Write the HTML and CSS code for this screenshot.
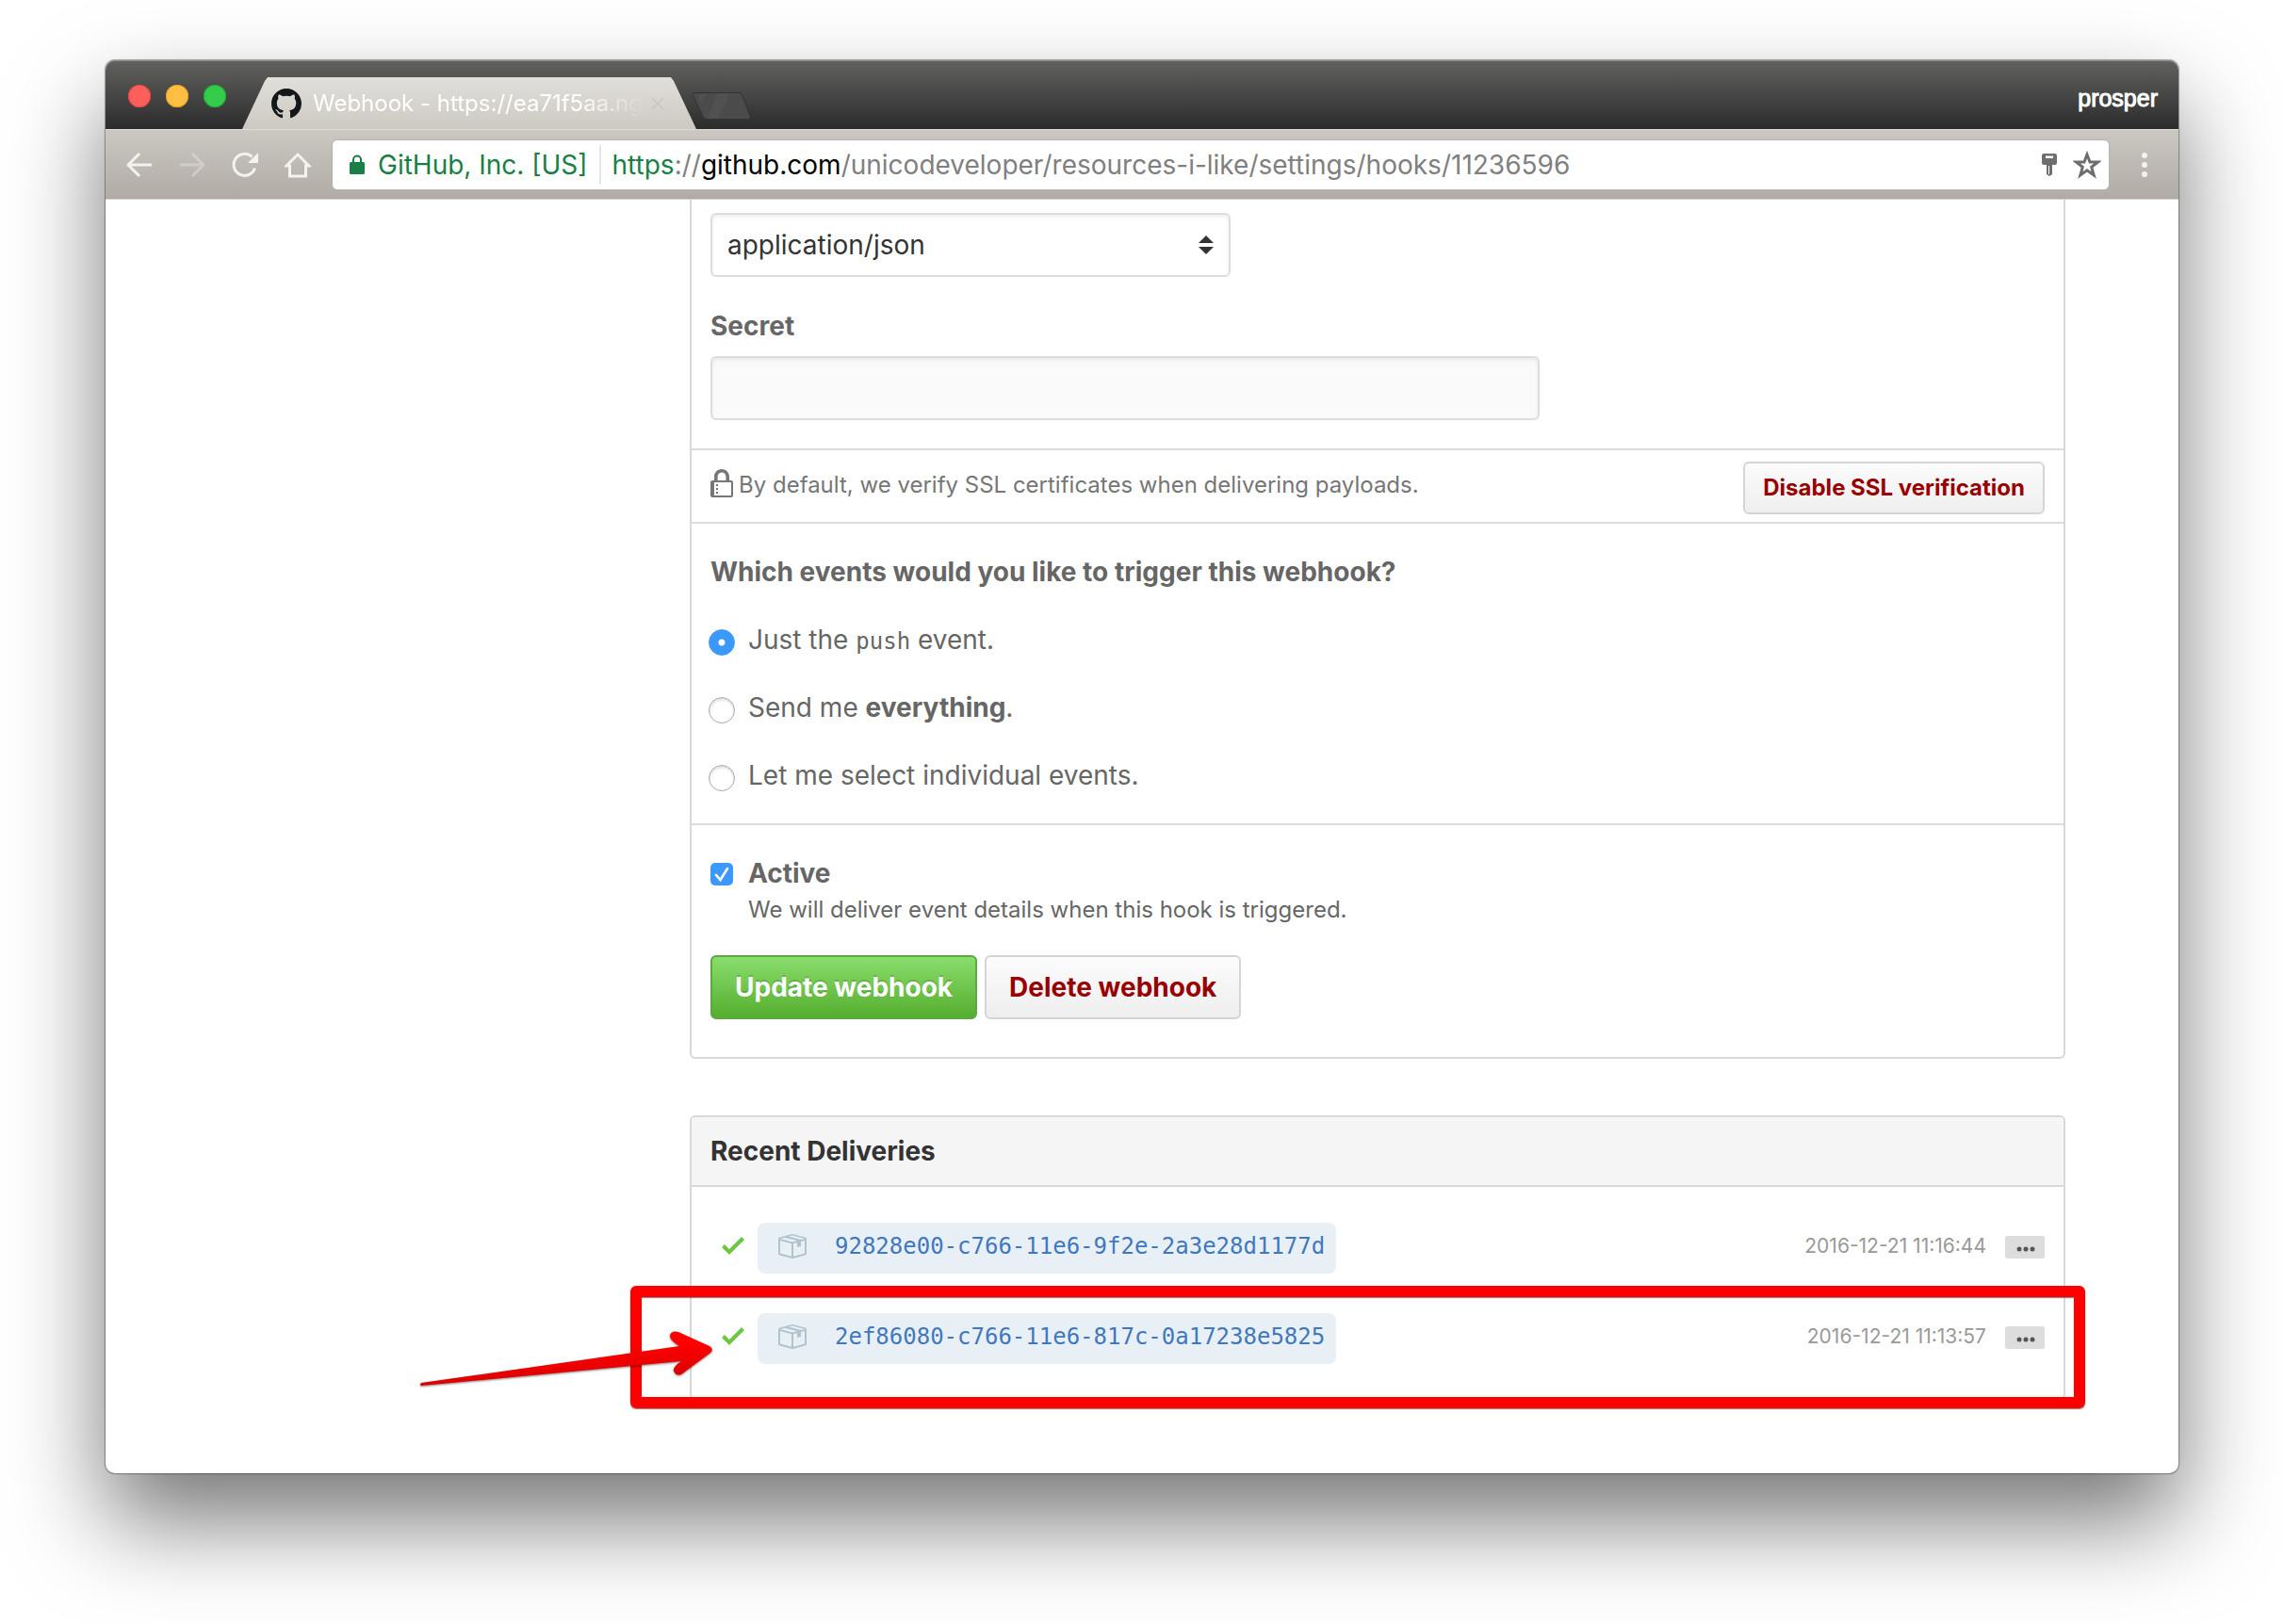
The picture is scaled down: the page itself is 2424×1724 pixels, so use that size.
FILE: index.html
```
<!DOCTYPE html>
<html lang="en">
<head>
<meta charset="utf-8">
<title>Webhook - https://ea71f5aa.ng</title>
<link rel="stylesheet" href="styles.css">
</head>
<body>
<svg class="sprite" width="0" height="0" aria-hidden="true">
  <symbol id="check" viewBox="0 0 12 16"><path d="M12 5l-8 8-4-4 1.5-1.5L4 10l6.5-6.5z"/></symbol>
  <symbol id="package" viewBox="0 0 16 16"><path fill-rule="evenodd" d="M1 4.27v7.47c0 .45.3.84.75.97l6.5 1.73c.16.05.34.05.5 0l6.5-1.73c.45-.13.75-.52.75-.97V4.27c0-.45-.3-.84-.75-.97l-6.5-1.74a1.4 1.4 0 0 0-.5 0L1.75 3.3c-.45.13-.75.52-.75.97zm7 9.09l-6-1.59V5l6 1.61v6.75zM2 4l2.5-.67L11 5.06l-2.5.67L2 4zm13 7.77l-6 1.59V6.61l2-.55V8.5l2-.53V5.53L15 5v6.77zm-2-7.24L6.5 2.8l2-.53L15 4l-2 .53z"/></symbol>
  <symbol id="dots" viewBox="0 0 42 24"><circle cx="15" cy="14" r="2.5"/><circle cx="22" cy="14" r="2.5"/><circle cx="29" cy="14" r="2.5"/></symbol>
</svg>
<div class="window">
  <header class="titlebar">
    <div class="lights">
      <button class="light light-close" aria-label="Close"></button>
      <button class="light light-min" aria-label="Minimize"></button>
      <button class="light light-max" aria-label="Zoom"></button>
    </div>
    <div class="tab">
      <svg class="mark" viewBox="0 0 16 16" aria-hidden="true"><path fill-rule="evenodd" d="M8 0C3.58 0 0 3.58 0 8c0 3.54 2.29 6.53 5.47 7.59.4.07.55-.17.55-.38 0-.19-.01-.82-.01-1.49-2.01.37-2.53-.49-2.69-.94-.09-.23-.48-.94-.82-1.13-.28-.15-.68-.52-.01-.53.63-.01 1.08.58 1.23.82.72 1.21 1.87.87 2.33.66.07-.52.28-.87.51-1.07-1.78-.2-3.64-.89-3.64-3.95 0-.87.31-1.59.82-2.15-.08-.2-.36-1.02.08-2.12 0 0 .67-.21 2.2.82.64-.18 1.32-.27 2-.27s1.36.09 2 .27c1.53-1.04 2.2-.82 2.2-.82.44 1.1.16 1.92.08 2.12.51.56.82 1.27.82 2.15 0 3.07-1.87 3.75-3.65 3.95.29.25.54.73.54 1.48 0 1.07-.01 1.93-.01 2.2 0 .21.15.46.55.38A8.01 8.01 0 0 0 16 8c0-4.42-3.58-8-8-8z"/></svg>
      <span class="tab-title">Webhook - https://ea71f5aa.ng</span>
      <button class="tab-close" aria-label="Close tab"><svg viewBox="0 0 14 14"><path d="M1 1l12 12M13 1L1 13"/></svg></button>
    </div>
    <button class="new-tab" aria-label="New tab"><svg viewBox="0 0 64 32"><path class="nt" d="M3 1.500h47q3 0 4 3l8 22q1 3-2 3H16q-3 0-4-3L1.500 4.500q-1-3 1.500-3z"/><path class="nt-shine" d="M27 2h14L28 29H17zM12 2h4l-6 10-3-7z"/></svg></button>
    <span class="profile">prosper</span>
  </header>
  <nav class="toolbar">
    <button class="nav" aria-label="Back"><svg viewBox="0 0 28 28"><path d="M27 14H3M14 2L2 14l12 12"/></svg></button>
    <button class="nav nav-off" aria-label="Forward"><svg viewBox="0 0 28 28"><path d="M1 14h24M14 2l12 12-12 12"/></svg></button>
    <button class="nav" aria-label="Reload"><svg viewBox="0 0 28 28"><path d="M24.500 17.500A11.500 11.500 0 1 1 21.500 5.500"/><path class="solid" d="M28 1v11H17z"/></svg></button>
    <button class="nav" aria-label="Home"><svg viewBox="0 0 28 28"><path d="M2 15L14 3l12 12h-3.500v11h-17V15z"/></svg></button>
    <div class="address">
      <svg class="secure" viewBox="0 0 16 22" aria-hidden="true"><rect y="8" width="16" height="13" rx="1.500"/><path d="M4 9V5.500a4 4 0 0 1 8 0V9"/></svg>
      <span class="owner">GitHub, Inc. [US]</span>
      <span class="url"><span class="scheme">https</span>://<span class="host">github.com</span>/unicodeveloper/resources-i-like/settings/hooks/11236596</span>
      <svg class="key" viewBox="0 0 16 24" aria-hidden="true"><path fill-rule="evenodd" d="M2 0h12q2 0 2 2v8q0 2-2 2h-3v10l-3 2-3-2V12H2q-2 0-2-2V2q0-2 2-2zM4 2.500v2.500h8V2.500zM7 13v9h1v-9z"/></svg>
      <svg class="star" viewBox="0 0 30 30" aria-hidden="true"><path d="M15 4l3 8h8.500l-6.800 5.300 2.500 8.700-7.200-5.200L7.800 26l2.500-8.700L3.500 12H12z"/></svg>
    </div>
    <button class="menu" aria-label="Menu"><svg viewBox="0 0 8 28"><circle cx="4" cy="4" r="3"/><circle cx="4" cy="14" r="3"/><circle cx="4" cy="24" r="3"/></svg></button>
  </nav>
  <main class="page">
    <form class="panel hook-form">
      <div class="section section-fields">
        <select class="field select" aria-label="Content type"><option>application/json</option></select>
        <label class="label" for="secret">Secret</label>
        <input class="field secret" id="secret" type="text">
      </div>
      <div class="section ssl">
        <svg class="lock" viewBox="0 0 12 16" aria-hidden="true"><path fill-rule="evenodd" d="M4 13H3v-1h1v1zm8-6v7c0 .55-.45 1-1 1H1c-.55 0-1-.45-1-1V7c0-.55.45-1 1-1h1V4c0-2.200 1.800-4 4-4s4 1.800 4 4v2h1c.55 0 1 .45 1 1zM3.800 6h4.410V4c0-1.220-.98-2.200-2.200-2.200-1.220 0-2.200.98-2.200 2.200v2H3.800zM11 7H2v7h9V7zM4 8H3v1h1V8zm0 2H3v1h1v-1z"/></svg>
        <span class="ssl-text">By default, we verify SSL certificates when delivering payloads.</span>
        <button class="btn btn-sm btn-danger" type="button">Disable SSL verification</button>
      </div>
      <div class="section events" role="radiogroup" aria-labelledby="events-title">
        <h2 class="question" id="events-title">Which events would you like to trigger this webhook?</h2>
        <label class="choice"><input class="radio" type="radio" name="events" checked><span>Just the <code>push</code> event.</span></label>
        <label class="choice"><input class="radio" type="radio" name="events"><span>Send me <strong>everything</strong>.</span></label>
        <label class="choice"><input class="radio" type="radio" name="events"><span>Let me select individual events.</span></label>
      </div>
      <div class="section actions">
        <label class="choice"><input class="checkbox" type="checkbox" checked><strong>Active</strong></label>
        <p class="hint">We will deliver event details when this hook is triggered.</p>
        <div class="buttons">
          <button class="btn btn-primary" type="button">Update webhook</button>
          <button class="btn btn-danger" type="button">Delete webhook</button>
        </div>
      </div>
    </form>
    <section class="panel deliveries">
      <h2 class="panel-title">Recent Deliveries</h2>
      <ul class="list">
        <li class="delivery">
          <svg class="ok" aria-label="Delivered"><use href="#check"/></svg>
          <a class="guid" href="#d1"><svg class="box" aria-hidden="true"><use href="#package"/></svg><code>92828e00-c766-11e6-9f2e-2a3e28d1177d</code></a>
          <time class="time">2016-12-21 11:16:44</time>
          <button class="more" aria-label="Details"><svg><use href="#dots"/></svg></button>
        </li>
        <li class="delivery">
          <svg class="ok" aria-label="Delivered"><use href="#check"/></svg>
          <a class="guid" href="#d2"><svg class="box" aria-hidden="true"><use href="#package"/></svg><code>2ef86080-c766-11e6-817c-0a17238e5825</code></a>
          <time class="time">2016-12-21 11:13:57</time>
          <button class="more" aria-label="Details"><svg><use href="#dots"/></svg></button>
          <div class="highlight"></div>
          <svg class="arrow" viewBox="0 0 314 62" aria-hidden="true">
            <defs><linearGradient id="red" x1="0" y1="0" x2="0.200" y2="1"><stop offset=".4" stop-color="#f00"/><stop offset="1" stop-color="#d80000"/></linearGradient></defs>
            <path fill="url(#red)" d="M2 55L276 16Q266 10 266 5Q267-1 275 1L308 16Q313 19 309 23L278 46Q272 48 270 42Q269 38 278 32L2 58Q0 57 2 55z"/>
          </svg>
        </li>
      </ul>
    </section>
  </main>
</div>
</body>
</html>
```
FILE: styles.css
```
* { box-sizing: border-box; }

body {
  margin: 0;
  padding: 64px 112px 160px;
  background: #fff;
  color: #666;
  font: 28px/42px Inter, "Liberation Sans", sans-serif;
}

h2, p, ul { margin: 0; padding: 0; }
button { margin: 0; padding: 0; border: 0; background: none; font: inherit; }
svg { display: block; flex: none; }
.sprite { position: absolute; }

.window {
  border-radius: 10px;
  background: #fff;
  box-shadow: 0 0 1px 1px rgba(0, 0, 0, .35), 0 50px 100px rgba(0, 0, 0, .54);
}

/* Title bar */
.titlebar {
  display: flex;
  align-items: flex-end;
  height: 73px;
  padding: 0 22px 0 24px;
  border-radius: 10px 10px 0 0;
  background: linear-gradient(#616260, #2b2b2b);
  box-shadow: inset 0 1px #8c8c8c;
}
.lights { display: flex; gap: 16px; padding-bottom: 23px; }
.light { width: 24px; height: 24px; border-radius: 50%; }
.light-close { background: #ff5f5a; box-shadow: inset 0 0 0 1px #e2463f; }
.light-min { background: #fdbe41; box-shadow: inset 0 0 0 1px #dfa023; }
.light-max { background: #35cb4b; box-shadow: inset 0 0 0 1px #1faa30; }
.tab {
  display: flex;
  align-items: center;
  width: 482px;
  height: 55px;
  margin-left: 17px;
  padding: 0 34px 0 31px;
  background: linear-gradient(#e1dfda, #cdc9c2);
  clip-path: polygon(0 100%, 24px 4px, 27px 0, 455px 0, 458px 4px, 100% 100%);
}
.mark { width: 32px; height: 32px; fill: #14171a; }
.tab-title {
  flex: 1;
  margin-left: 12px;
  color: #fff;
  font-size: 24px;
  white-space: nowrap;
  mask-image: linear-gradient(90deg, #000 78%, transparent 98%);
}
.tab-close svg { width: 14px; height: 14px; stroke: #c9c9c9; stroke-width: 2; }
.new-tab { padding: 0 0 8px; margin-left: -5px; }
.new-tab svg { width: 64px; height: 32px; }
.nt { fill: #4b4b4b; stroke: #333; }
.nt-shine { fill: #555; opacity: .6; }
.profile {
  margin-left: auto;
  padding-bottom: 12px;
  color: #fff;
  font-family: "Liberation Sans", sans-serif;
  font-size: 25px;
  -webkit-text-stroke: 1px #fff;
}

/* Toolbar */
.toolbar {
  display: flex;
  align-items: center;
  gap: 28px;
  height: 75px;
  padding: 0 32px 0 22px;
  border-top: 1px solid #dedcd6;
  border-bottom: 1px solid #d3cfc6;
  background: linear-gradient(#cbc8c1, #b0aba5);
}
.nav svg { width: 28px; height: 28px; fill: none; stroke: #f3f2f0; stroke-width: 3; }
.nav .solid { fill: #f3f2f0; stroke: none; }
.nav-off { opacity: .35; }
.address {
  display: flex;
  flex: 1;
  align-items: center;
  height: 54px;
  margin-left: -6px;
  padding: 0 8px 0 18px;
  border: 1px solid #b3b3b1;
  border-radius: 6px;
  background: #fff;
  color: #808080;
  white-space: nowrap;
}
.secure { width: 16px; height: 22px; fill: #188044; }
.secure path { fill: none; stroke: #188044; stroke-width: 2; }
.owner {
  margin-left: 14px;
  padding-right: 12px;
  border-right: 2px solid #e6e6e6;
  color: #188044;
}
.url { flex: 1; padding-left: 12px; }
.scheme { color: #188044; }
.host { color: #000; }
.key { width: 16px; height: 24px; fill: #6e6e6e; }
.star { width: 30px; height: 30px; margin-left: 17px; fill: none; stroke: #6e6e6e; stroke-width: 3; }
.menu { margin-left: 5px; }
.menu svg { width: 8px; height: 28px; fill: #f3f2f0; }

/* Page */
.page {
  display: flex;
  flex-direction: column;
  gap: 60px;
  padding: 0 120px 78px 620px;
}
.panel { border: 2px solid #d8d8d8; border-radius: 6px; }
.hook-form { border-top: 0; border-radius: 0 0 6px 6px; }
.section { padding: 30px 20px; }
.section + .section { border-top: 2px solid #ddd; }
.section-fields { display: flex; flex-direction: column; align-items: flex-start; padding-top: 14px; }

.field {
  height: 68px;
  padding: 0 16px;
  border: 2px solid #ddd;
  border-radius: 6px;
  box-shadow: inset 0 2px 4px rgba(0, 0, 0, .075);
  color: #333;
  font: inherit;
}
.select {
  width: 552px;
  appearance: none;
  background: #fff url("data:image/svg+xml,%3Csvg xmlns='http://www.w3.org/2000/svg' viewBox='0 0 16 20'%3E%3Cpath fill='%23333' d='M0 8l8-8 8 8zM0 12h16l-8 8z'/%3E%3C/svg%3E") no-repeat right 16px center / 16px 20px;
}
.label { margin: 31px 0 11px; font-weight: 700; }
.secret { width: 880px; background: #fafafa; }

.ssl { display: flex; align-items: flex-start; padding: 12px 20px 8px; }
.lock { width: 24px; height: 32px; margin-top: 8px; fill: #767676; }
.ssl-text { flex: 1; margin-left: 6px; color: #767676; font-size: 24px; line-height: 50px; }

.btn {
  height: 68px;
  padding: 0 24px;
  border: 2px solid #d5d5d5;
  border-radius: 6px;
  background: linear-gradient(#fcfcfc, #eee);
  font-weight: 700;
}
.btn-sm { height: 56px; padding: 0 19px; font-size: 24px; }
.btn-danger { color: #900; }
.btn-primary {
  border-color: #5ca941;
  background: linear-gradient(#8add6d, #55ae2e);
  color: #fff;
  text-shadow: 0 -2px rgba(0, 0, 0, .15);
}

.events { display: flex; flex-direction: column; gap: 30px; }
.question { font-size: inherit; font-weight: 700; }
.choice { display: flex; align-items: flex-start; }
strong { font-weight: 700; }
code { font-family: "DejaVu Sans Mono", monospace; font-size: 24px; line-height: 24px; }
.radio, .checkbox { flex: none; appearance: none; margin: 10px 0 0; }
.radio {
  width: 28px;
  height: 28px;
  margin: 10px 14px 0 -2px;
  border: 1px solid #aaa;
  border-radius: 50%;
  background: #fff;
  box-shadow: inset 0 2px 3px rgba(0, 0, 0, .15);
}
.radio:checked {
  border-color: #3b99fc;
  background: radial-gradient(circle, #fff 3px, #3b99fc 4px);
  box-shadow: none;
}
.checkbox {
  width: 24px;
  height: 24px;
  margin-right: 16px;
  border-radius: 5px;
  background: #3b99fc url("data:image/svg+xml,%3Csvg xmlns='http://www.w3.org/2000/svg' viewBox='0 0 24 24'%3E%3Cpath fill='none' stroke='%23fff' stroke-width='2.600' stroke-linecap='round' d='M6 13l4.500 5L18 6'/%3E%3C/svg%3E");
}
.hint { padding-left: 40px; font-size: 24px; line-height: 36px; }
.buttons { display: flex; gap: 8px; margin-top: 30px; }
.actions { padding-bottom: 40px; }

/* Deliveries */
.panel-title {
  padding: 15px 20px;
  border-bottom: 2px solid #d8d8d8;
  border-radius: 4px 4px 0 0;
  background: #f5f5f5;
  color: #333;
  font-size: inherit;
  font-weight: 700;
}
.list {
  display: flex;
  flex-direction: column;
  gap: 42px;
  padding: 38px 20px 36px 32px;
  list-style: none;
}
.delivery { position: relative; display: flex; align-items: flex-start; line-height: 50px; }
.ok { width: 24px; height: 32px; margin-top: 8px; fill: #6cc644; }
.guid {
  display: flex;
  align-items: center;
  height: 54px;
  margin-left: 14px;
  padding: 0 12px 4px 20px;
  border-radius: 8px;
  background: #e8f0f5;
  color: #4078c0;
  text-decoration: none;
}
.box { width: 32px; height: 32px; margin-right: 30px; fill: #b0c4ce; }
.time { margin-left: auto; color: #999; font-size: 21px; }
.more { margin: 14px 0 0 20px; border-radius: 2px; background: #ddd; }
.more svg { width: 42px; height: 24px; fill: #555; }

/* Callout drawn over the second delivery */
.highlight {
  position: absolute;
  inset: -29px -43px -47px -97px;
  border: 12px solid #f00;
  border-radius: 6px;
  box-shadow: 0 1px 1px rgba(0, 0, 0, .5), inset 0 1px 1px rgba(0, 0, 0, .5);
  pointer-events: none;
}
.arrow {
  position: absolute;
  top: 19px;
  left: -321px;
  width: 314px;
  height: 62px;
  overflow: visible;
  filter: drop-shadow(0 1px 1px rgba(0, 0, 0, .5));
  pointer-events: none;
}
```
